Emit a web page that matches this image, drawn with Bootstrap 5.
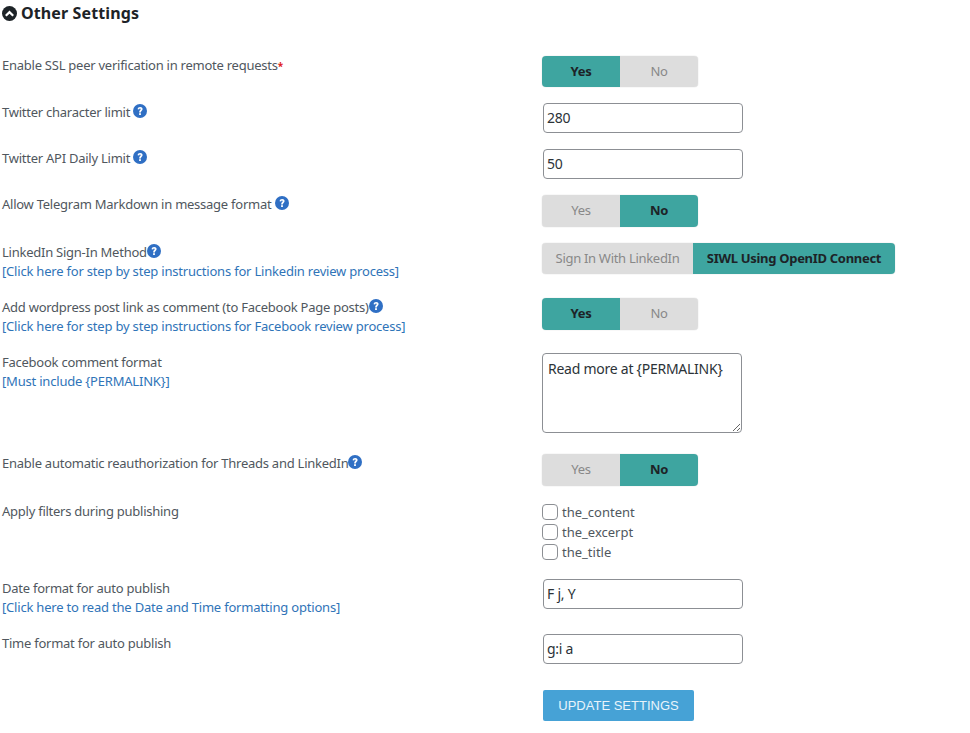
<!DOCTYPE html>
<html lang="en">
<head>
<meta charset="utf-8">
<title>Other Settings</title>
<link rel="stylesheet" href="https://cdn.jsdelivr.net/npm/bootstrap@5.3.0/dist/css/bootstrap.min.css">
<style>
body{background:#fff;font-family:"Noto Sans",sans-serif;font-size:13px;line-height:19px;color:#50575e;padding:0 0 0 2px;overflow:hidden}
.set-head{height:56px;padding-top:3px;font-size:16px;line-height:20px;font-weight:700;color:#1d2327;gap:4px;letter-spacing:.12px}
.head-ico{margin-top:3px}
.set-row{margin-bottom:16px}
.set-row.gap-l{margin-bottom:17px}
.set-row.gap-t{margin-bottom:21px}
.set-row.gap-b{margin-bottom:26px}
.set-label{width:540px;flex:none;letter-spacing:-.25px}
.set-label a{color:#2f74b8;text-decoration:none;display:block;letter-spacing:-.2px}
.req{color:#e02020;font-size:10px;font-weight:700}
.help{display:inline-block;vertical-align:top;margin-top:1px}
.tog{display:inline-flex;border-radius:4px;overflow:hidden;height:31px;box-shadow:0 0 1px rgba(0,0,0,.3)}
.tog span{display:flex;align-items:center;justify-content:center;background:#ddd;color:#888;width:78px;letter-spacing:-.3px}
.tog span.on{background:#3ea5a0;color:#1d2327;font-weight:700}
.tog span.wide1{width:151px}
.tog span.wide2{width:202px}
.t32{height:32px}
.t32 span{padding-bottom:2px}
.fld{display:block;width:200px;height:30px;margin-left:1px;border:1px solid #8c8f94;border-radius:4px;padding:0 3px 2px;font:14px/26px "Noto Sans",sans-serif;letter-spacing:-.25px;color:#2c3338;background:#fff}
.fld-ta{height:80px;margin-left:0;padding:5px;line-height:20px;resize:both}
.chk{height:20px;gap:4px;font-size:13px}
.chk input{width:16px;height:16px;margin:0;border:1px solid #8c8f94;border-radius:4px;appearance:none;background:#fff;flex:none}
.upd{display:block;margin-left:1px;width:151px;height:31px;background:#46a2d6;color:#e8f4fb;border:0;border-radius:2px;font:13px "Liberation Sans",sans-serif;padding:0}
</style>
</head>
<body>
<div class="set-head d-flex align-items-start">
<svg class="head-ico" width="15" height="15" viewBox="0 0 16 16" aria-hidden="true"><circle cx="8" cy="8" r="8" fill="#1d2327"/><path d="M3.2 9.6 8 4.8l4.8 4.8-1.7 1.7L8 8.2l-3.1 3.1z" fill="#fff"/></svg>
<span>Other Settings</span>
</div>

<div class="set-row d-flex">
<div class="set-label">Enable SSL peer verification in remote requests<span class="req">*</span></div>
<div class="tog"><span class="on">Yes</span><span>No</span></div>
</div>

<div class="set-row d-flex">
<div class="set-label">Twitter character limit <svg class="help" width="14" height="14" viewBox="0 0 14 14" aria-hidden="true"><circle cx="7" cy="7" r="7" fill="#2f6fc4"/><path d="M4.6 5.3C4.7 3.8 5.8 3 7.1 3c1.5 0 2.5.9 2.5 2.1 0 1.9-1.7 1.7-1.7 3.4H6.1c0-2.4 1.6-2.3 1.6-3.3 0-.5-.3-.7-.7-.7-.5 0-.8.3-.8.9z" fill="#fff"/><rect x="6.1" y="9.2" width="1.8" height="1.8" fill="#fff"/></svg></div>
<input class="fld" value="280">
</div>

<div class="set-row d-flex">
<div class="set-label">Twitter API Daily Limit <svg class="help" width="14" height="14" viewBox="0 0 14 14" aria-hidden="true"><circle cx="7" cy="7" r="7" fill="#2f6fc4"/><path d="M4.6 5.3C4.7 3.8 5.8 3 7.1 3c1.5 0 2.5.9 2.5 2.1 0 1.9-1.7 1.7-1.7 3.4H6.1c0-2.4 1.6-2.3 1.6-3.3 0-.5-.3-.7-.7-.7-.5 0-.8.3-.8.9z" fill="#fff"/><rect x="6.1" y="9.2" width="1.8" height="1.8" fill="#fff"/></svg></div>
<input class="fld" value="50">
</div>

<div class="set-row d-flex">
<div class="set-label">Allow Telegram Markdown in message format <svg class="help" width="14" height="14" viewBox="0 0 14 14" aria-hidden="true"><circle cx="7" cy="7" r="7" fill="#2f6fc4"/><path d="M4.6 5.3C4.7 3.8 5.8 3 7.1 3c1.5 0 2.5.9 2.5 2.1 0 1.9-1.7 1.7-1.7 3.4H6.1c0-2.4 1.6-2.3 1.6-3.3 0-.5-.3-.7-.7-.7-.5 0-.8.3-.8.9z" fill="#fff"/><rect x="6.1" y="9.2" width="1.8" height="1.8" fill="#fff"/></svg></div>
<div class="tog t32"><span>Yes</span><span class="on">No</span></div>
</div>

<div class="set-row gap-l d-flex">
<div class="set-label">LinkedIn Sign-In Method<svg class="help" width="14" height="14" viewBox="0 0 14 14" aria-hidden="true"><circle cx="7" cy="7" r="7" fill="#2f6fc4"/><path d="M4.6 5.3C4.7 3.8 5.8 3 7.1 3c1.5 0 2.5.9 2.5 2.1 0 1.9-1.7 1.7-1.7 3.4H6.1c0-2.4 1.6-2.3 1.6-3.3 0-.5-.3-.7-.7-.7-.5 0-.8.3-.8.9z" fill="#fff"/><rect x="6.1" y="9.2" width="1.8" height="1.8" fill="#fff"/></svg><a href="#">[Click here for step by step instructions for Linkedin review process]</a></div>
<div class="tog"><span class="wide1">Sign In With LinkedIn</span><span class="on wide2">SIWL Using OpenID Connect</span></div>
</div>

<div class="set-row gap-l d-flex">
<div class="set-label">Add wordpress post link as comment (to Facebook Page posts)<svg class="help" width="14" height="14" viewBox="0 0 14 14" aria-hidden="true"><circle cx="7" cy="7" r="7" fill="#2f6fc4"/><path d="M4.6 5.3C4.7 3.8 5.8 3 7.1 3c1.5 0 2.5.9 2.5 2.1 0 1.9-1.7 1.7-1.7 3.4H6.1c0-2.4 1.6-2.3 1.6-3.3 0-.5-.3-.7-.7-.7-.5 0-.8.3-.8.9z" fill="#fff"/><rect x="6.1" y="9.2" width="1.8" height="1.8" fill="#fff"/></svg><a href="#">[Click here for step by step instructions for Facebook review process]</a></div>
<div class="tog t32"><span class="on">Yes</span><span>No</span></div>
</div>

<div class="set-row gap-t d-flex">
<div class="set-label">Facebook comment format<a href="#">[Must include {PERMALINK}]</a></div>
<textarea class="fld fld-ta">Read more at {PERMALINK}</textarea>
</div>

<div class="set-row d-flex">
<div class="set-label">Enable automatic reauthorization for Threads and LinkedIn<svg class="help" width="14" height="14" viewBox="0 0 14 14" aria-hidden="true"><circle cx="7" cy="7" r="7" fill="#2f6fc4"/><path d="M4.6 5.3C4.7 3.8 5.8 3 7.1 3c1.5 0 2.5.9 2.5 2.1 0 1.9-1.7 1.7-1.7 3.4H6.1c0-2.4 1.6-2.3 1.6-3.3 0-.5-.3-.7-.7-.7-.5 0-.8.3-.8.9z" fill="#fff"/><rect x="6.1" y="9.2" width="1.8" height="1.8" fill="#fff"/></svg></div>
<div class="tog t32"><span>Yes</span><span class="on">No</span></div>
</div>

<div class="set-row gap-l d-flex">
<div class="set-label">Apply filters during publishing</div>
<div>
<label class="chk d-flex align-items-center"><input type="checkbox">the_content</label>
<label class="chk d-flex align-items-center"><input type="checkbox">the_excerpt</label>
<label class="chk d-flex align-items-center"><input type="checkbox">the_title</label>
</div>
</div>

<div class="set-row gap-l d-flex">
<div class="set-label">Date format for auto publish<a href="#">[Click here to read the Date and Time formatting options]</a></div>
<input class="fld" value="F j, Y">
</div>

<div class="set-row gap-b d-flex">
<div class="set-label">Time format for auto publish</div>
<input class="fld" value="g:i a">
</div>

<div class="d-flex">
<div class="set-label"></div>
<button class="upd" type="button">UPDATE SETTINGS</button>
</div>
<script src="https://cdn.jsdelivr.net/npm/bootstrap@5.3.0/dist/js/bootstrap.bundle.min.js"></script>
</body>
</html>
